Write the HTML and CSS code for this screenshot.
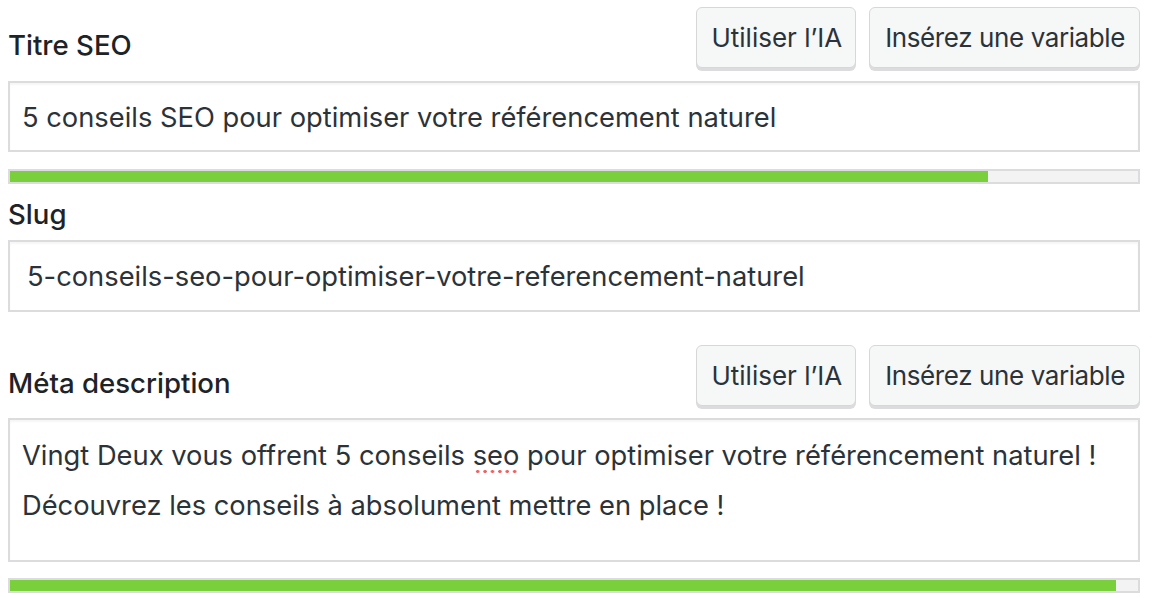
FILE: index.html
```html
<!DOCTYPE html>
<html lang="fr">
<head>
<meta charset="utf-8">
<title>SEO</title>
<link rel="stylesheet" href="styles.css">
</head>
<body>
<div class="panel">
  <div class="head">
    <div class="label">Titre SEO</div>
    <div class="actions">
      <button class="btn">Utiliser l’IA</button>
      <button class="btn">Insérez une variable</button>
    </div>
  </div>
  <div class="input title-input">5 conseils SEO pour optimiser votre référencement naturel</div>
  <div class="bar"><div class="fill" style="width: 86.7%"></div></div>

  <div class="label slug-label">Slug</div>
  <div class="input slug-input">5-conseils-seo-pour-optimiser-votre-referencement-naturel</div>

  <div class="head head-meta">
    <div class="label">Méta description</div>
    <div class="actions">
      <button class="btn">Utiliser l’IA</button>
      <button class="btn">Insérez une variable</button>
    </div>
  </div>
  <div class="textarea">
    <div class="line">Vingt Deux vous offrent 5 conseils <span class="spell">seo</span> pour optimiser votre référencement naturel !</div>
    <div class="line">Découvrez les conseils à absolument mettre en place !</div>
  </div>
  <div class="bar bar-meta"><div class="fill" style="width: 98.05%"></div></div>
</div>
</body>
</html>
```
FILE: styles.css
```css
* { box-sizing: border-box; }
html, body { margin: 0; padding: 0; background: #fff; }
body {
  font-family: Inter, "Noto Sans", sans-serif;
  color: #2c3338;
  font-size: 27.3px;
}
.panel {
  width: 1132px;
  margin-left: 8px;
  padding-top: 7px;
}
.head {
  display: flex;
  justify-content: space-between;
  align-items: flex-end;
  height: 64px;
}
.label {
  font-weight: 500;
  color: #1d2327;
  line-height: 30px;
  font-size: 27.6px;
}
.head .label { margin-bottom: 11px; }
.actions { display: flex; gap: 13px; align-self: flex-start; }
.btn {
  font-family: inherit;
  font-size: 26px;
  color: #2c3338;
  background: #f6f7f7;
  border: 1px solid #d7d7d9;
  border-radius: 6px;
  box-shadow: 0 3px 0 #dcdcde;
  height: 61px;
  padding: 0 13px 0 14px;
  cursor: pointer;
}
.btn + .btn { letter-spacing: -0.4px; padding: 0 14px 0 15px; }
.input {
  margin-top: 10px;
  height: 71px;
  border: 2px solid #dcdcde;
  box-shadow: inset 0 2px 2px rgba(0,0,0,0.04);
  display: flex;
  align-items: center;
  padding: 2px 12px 0;
  line-height: 30px;
}
.bar {
  margin-top: 17px;
  height: 15px;
  border: 2px solid #dcdcde;
  background: #f3f3f3;
}
.fill { height: 100%; background: #7ad03a; }
.slug-label { margin-top: 15px; margin-bottom: 11px; }
.slug-input { margin-top: 0; height: 72px; padding-left: 17px; }
.head-meta { margin-top: 33px; }
.textarea {
  margin-top: 9px;
  height: 144px;
  border: 2px solid #dcdcde;
  box-shadow: inset 0 2px 2px rgba(0,0,0,0.04);
  padding: 21px 12px 0;
}
.line { line-height: 30px; height: 30px; }
.line:first-child { margin-bottom: 20px; }
.spell {
  background-image: radial-gradient(circle, #f06262 1.4px, transparent 1.9px);
  background-size: 7.4px 5px;
  background-repeat: repeat-x;
  background-position: 1px 100%;
  padding-bottom: 2px;
}
.bar-meta { margin-top: 16px; }
```
